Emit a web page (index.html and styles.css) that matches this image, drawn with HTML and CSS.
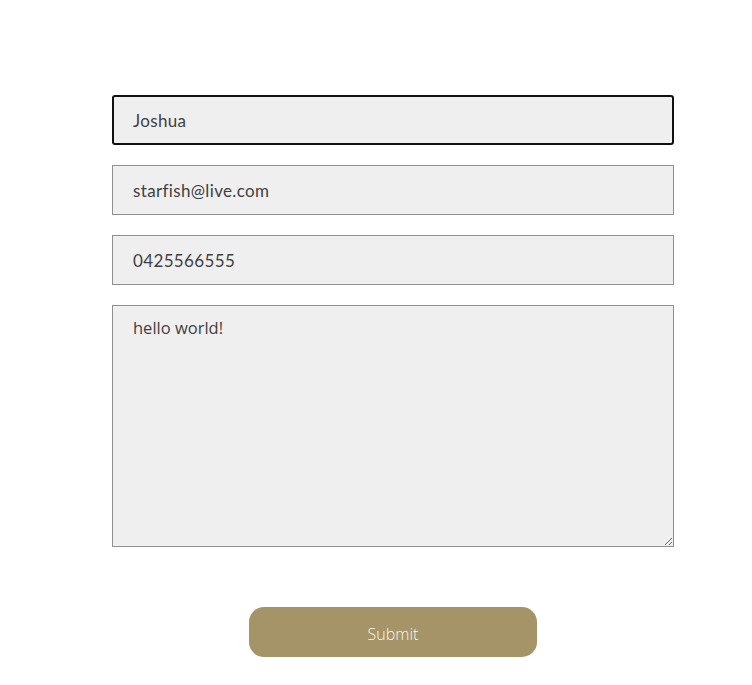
FILE: index.html
```html
<!DOCTYPE html>
<html>
<head>
<meta charset="utf-8">
<link rel="stylesheet" href="styles.css">
</head>
<body>
<form class="contact">
  <input class="field field-focus" type="text" value="Joshua">
  <input class="field" type="email" value="starfish@live.com">
  <input class="field" type="tel" value="0425566555">
  <textarea class="field area">hello world!</textarea>
  <div class="actions">
    <button class="submit" type="button">Submit</button>
  </div>
</form>
</body>
</html>
```
FILE: styles.css
```css
html, body {
  margin: 0;
  padding: 0;
  background: #ffffff;
}
.contact {
  width: 562px;
  margin-left: 112px;
  padding-top: 95px;
  display: flex;
  flex-direction: column;
  gap: 20px;
}
.field {
  box-sizing: border-box;
  width: 562px;
  height: 50px;
  margin: 0;
  padding: 0 20px;
  border: 1px solid #8f8f8f;
  border-radius: 0;
  background: #efefef;
  color: #3f3f3f;
  font-family: Lato, "Open Sans", sans-serif;
  font-size: 17px;
  letter-spacing: 0.35px;
  outline: none;
}
.field-focus {
  border: 2px solid #111111;
  border-radius: 3px;
  padding-left: 19px;
}
.area {
  height: 242px;
  padding: 11px 20px;
  font-family: "Open Sans", sans-serif;
  font-size: 16.5px;
  letter-spacing: 0;
  line-height: 22px;
  resize: both;
}
.actions {
  display: flex;
  justify-content: center;
  padding-top: 40px;
}
.submit {
  width: 288px;
  height: 50px;
  border: none;
  border-radius: 15px;
  background: #a59468;
  color: #fbf7ee;
  font-family: "Open Sans", sans-serif;
  font-weight: 300;
  font-size: 16px;
  padding: 4px 0 0;
  cursor: pointer;
}
```
